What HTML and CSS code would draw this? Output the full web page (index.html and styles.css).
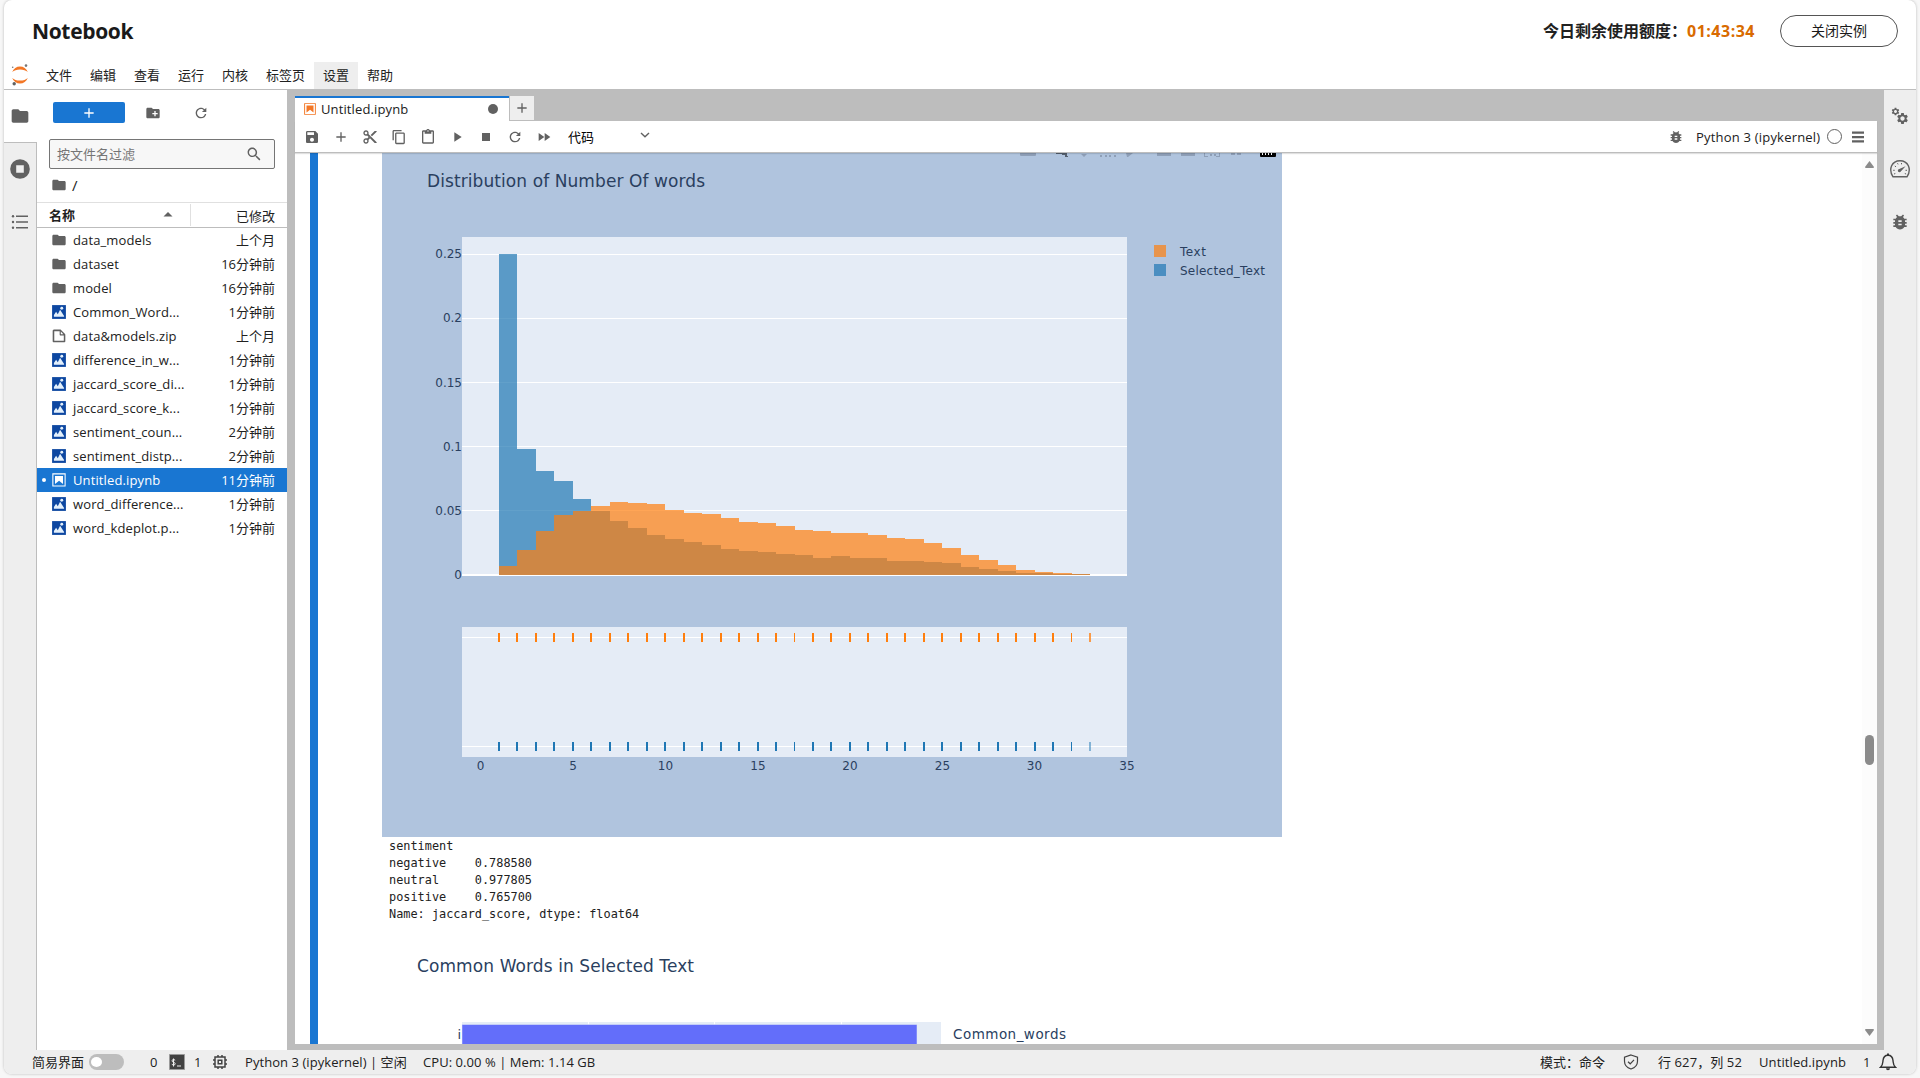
FILE: index.html
```html
<!DOCTYPE html>
<html lang="zh-CN">
<head>
<meta charset="utf-8">
<title>Notebook</title>
<link rel="stylesheet" href="styles.css">
</head>
<body>
<svg class="defs" width="0" height="0">
  <symbol id="folder" viewBox="0 0 24 24"><path d="M10 4H4c-1.1 0-1.99.9-1.99 2L2 18c0 1.1.9 2 2 2h16c1.1 0 2-.9 2-2V8c0-1.1-.9-2-2-2h-8l-2-2z"/></symbol>
  <symbol id="image" viewBox="0 0 22 22"><path fill="#0d47a1" d="M1.5 1.5h19v19h-19z"/><path fill="#e3f0fb" d="M4 17.5V15l3-4.5 2.300 3.500L12.500 8l5.500 8.500v1z"/><circle cx="14.800" cy="5.800" r="2" fill="#e3f0fb"/></symbol>
  <symbol id="file" viewBox="0 0 22 22"><path d="M19.300 8.200l-5.500-5.500c-.3-.3-.7-.5-1.200-.5H3.900c-.8.1-1.600.9-1.600 1.800v14.100c0 .9.7 1.600 1.600 1.600h14.200c.9 0 1.600-.7 1.600-1.600V9.400c.1-.5-.1-.9-.4-1.200zm-5.800-3.300l3.400 3.600h-3.400V4.900zm3.900 12.700H4.700c-.1 0-.2 0-.2-.2V4.700c0-.2.1-.3.2-.3h7.200v4.400s0 .8.300 1.100c.3.3 1.100.3 1.100.3h4.300v7.200s-.1.200-.2.200z"/></symbol>
  <symbol id="book" viewBox="0 0 22 22"><path d="M18.700 3.300v15.400H3.300V3.300h15.400m1.500-1.500H1.800v18.300h18.300l.1-18.300z"/><path d="M16.500 16.500l-5.400-4.300-5.600 4.300v-11h11z"/></symbol>
  <symbol id="plus" viewBox="0 0 24 24"><path d="M19 13h-6v6h-2v-6H5v-2h6V5h2v6h6v2z"/></symbol>
  <symbol id="refresh" viewBox="0 0 18 18"><path d="M9 13.500c-2.490 0-4.500-2.010-4.500-4.500S6.510 4.500 9 4.500c1.240 0 2.360.52 3.170 1.330L10 8h5V3l-1.760 1.760C12.150 3.680 10.660 3 9 3 5.690 3 3.010 5.690 3.010 9S5.690 15 9 15c2.970 0 5.430-2.160 5.900-5h-1.520c-.46 2-2.240 3.500-4.380 3.500z"/></symbol>
  <symbol id="bug" viewBox="0 0 24 24"><path d="M20 8h-2.810c-.45-.78-1.070-1.450-1.820-1.960L17 4.410 15.590 3l-2.170 2.170C12.960 5.060 12.490 5 12 5s-.96.06-1.410.17L8.410 3 7 4.410l1.620 1.630C7.880 6.550 7.260 7.220 6.810 8H4v2h2.090c-.05.33-.09.66-.09 1v1H4v2h2v1c0 .34.04.67.09 1H4v2h2.810c1.040 1.790 2.970 3 5.190 3s4.150-1.210 5.190-3H20v-2h-2.090c.05-.33.09-.66.09-1v-1h2v-2h-2v-1c0-.34-.04-.67-.09-1H20V8zm-6 8h-4v-2h4v2zm0-4h-4v-2h4v2z"/></symbol>
  <symbol id="gear" viewBox="0 0 24 24"><path d="M19.430 12.980c.04-.32.070-.64.070-.98s-.03-.66-.07-.98l2.110-1.650c.19-.15.240-.42.120-.64l-2-3.460c-.12-.22-.39-.3-.61-.22l-2.490 1c-.52-.4-1.080-.73-1.690-.98l-.38-2.650C14.460 2.180 14.250 2 14 2h-4c-.25 0-.46.18-.49.420l-.38 2.650c-.61.250-1.170.590-1.690.980l-2.490-1c-.23-.09-.49 0-.61.220l-2 3.460c-.13.220-.07.490.12.640l2.110 1.650c-.04.320-.07.650-.07.980s.03.660.070.980l-2.110 1.650c-.19.150-.24.420-.12.640l2 3.460c.12.220.39.300.61.220l2.490-1c.52.400 1.080.730 1.690.980l.38 2.650c.03.240.24.420.49.420h4c.25 0 .46-.18.490-.42l.38-2.650c.61-.25 1.170-.59 1.690-.98l2.490 1c.23.090.49 0 .61-.22l2-3.460c.12-.22.070-.49-.12-.64l-2.110-1.650zM12 16c-2.200 0-4-1.800-4-4s1.800-4 4-4 4 1.800 4 4-1.800 4-4 4z"/></symbol>
</svg>

<div class="card">
  <header class="top">
    <h1>Notebook</h1>
    <div class="quota">今日剩余使用额度：<span class="timer">01:43:34</span></div>
    <button class="close">关闭实例</button>
  </header>

  <nav class="menu">
    <svg class="logo" width="18" height="22" viewBox="0 0 18 22"><path fill="#f37726" d="M1.200 8C2.500 4.500 5.500 2.500 9 2.500S15.500 4.500 16.800 8C15 6.300 12.300 5.400 9 5.400S3 6.300 1.200 8zM1.200 14c1.300 3.500 4.300 5.500 7.800 5.500s6.500-2 7.800-5.500c-1.800 1.700-4.500 2.600-7.800 2.600S3 15.700 1.200 14z"/><circle cx="15" cy="1.600" r="1.300" fill="#767677"/><circle cx="1.700" cy="3.200" r=".8" fill="#767677"/><circle cx="3.200" cy="19.800" r="1.700" fill="#616262"/></svg>
    <span>文件</span><span>编辑</span><span>查看</span><span>运行</span><span>内核</span><span>标签页</span><span class="on">设置</span><span>帮助</span>
  </nav>

  <div class="work">
    <aside class="rail left">
      <div class="railtab on"><svg width="20" height="20"><use href="#folder"/></svg></div>
      <div class="railtab"><svg width="20" height="20" viewBox="0 0 20 20"><circle cx="10" cy="10" r="9.800"/><path fill="#eee" d="M6.200 6.200h7.600v7.600H6.200z"/></svg></div>
      <div class="railtab"><svg width="20" height="20" viewBox="0 0 20 20"><path d="M6 3.500h12v1.600H6zM6 9.200h12v1.600H6zM6 14.900h12v1.600H6z"/><circle cx="3" cy="4.300" r="1.200"/><circle cx="3" cy="10" r="1.200"/><circle cx="3" cy="15.700" r="1.200"/></svg></div>
    </aside>

    <section class="files">
      <div class="actions">
        <button class="new"><svg width="16" height="16"><use href="#plus"/></svg></button>
        <svg class="newdir" width="16" height="16" viewBox="0 0 24 24"><path d="M20 6h-8l-2-2H4c-1.110 0-1.990.89-1.990 2L2 18c0 1.110.89 2 2 2h16c1.110 0 2-.89 2-2V8c0-1.110-.89-2-2-2zm-1 8h-3v3h-2v-3h-3v-2h3V9h2v3h3v2z"/></svg>
        <svg class="reload" width="16" height="16"><use href="#refresh"/></svg>
      </div>
      <div class="filter"><span>按文件名过滤</span><svg width="16" height="16" viewBox="0 0 18 18"><path d="M12.100 10.900h-.7l-.2-.2c.8-.9 1.300-2.200 1.300-3.500 0-3-2.400-5.400-5.400-5.400S1.800 4.200 1.800 7.100s2.400 5.400 5.400 5.400c1.300 0 2.500-.5 3.500-1.300l.2.200v.7l4.100 4.100 1.200-1.200-4.100-4.100zm-5 0c-2.100 0-3.700-1.700-3.700-3.700s1.700-3.700 3.700-3.700 3.700 1.700 3.700 3.700-1.600 3.700-3.700 3.700z"/></svg></div>
      <div class="crumb"><svg width="16" height="16"><use href="#folder"/></svg><span>/</span></div>
      <div class="thead"><b>名称</b><svg width="10" height="5" viewBox="0 0 10 5"><path d="M5 0l4.500 4.500H.5z"/></svg><span class="mod">已修改</span></div>
      <ul class="list">
        <li><svg class="ic"><use href="#folder"/></svg><span class="nm">data_models</span><span class="tm">上个月</span></li>
        <li><svg class="ic"><use href="#folder"/></svg><span class="nm">dataset</span><span class="tm">16分钟前</span></li>
        <li><svg class="ic"><use href="#folder"/></svg><span class="nm">model</span><span class="tm">16分钟前</span></li>
        <li><svg class="ic"><use href="#image"/></svg><span class="nm">Common_Word...</span><span class="tm">1分钟前</span></li>
        <li><svg class="ic"><use href="#file"/></svg><span class="nm">data&amp;models.zip</span><span class="tm">上个月</span></li>
        <li><svg class="ic"><use href="#image"/></svg><span class="nm">difference_in_w...</span><span class="tm">1分钟前</span></li>
        <li><svg class="ic"><use href="#image"/></svg><span class="nm">jaccard_score_di...</span><span class="tm">1分钟前</span></li>
        <li><svg class="ic"><use href="#image"/></svg><span class="nm">jaccard_score_k...</span><span class="tm">1分钟前</span></li>
        <li><svg class="ic"><use href="#image"/></svg><span class="nm">sentiment_coun...</span><span class="tm">2分钟前</span></li>
        <li><svg class="ic"><use href="#image"/></svg><span class="nm">sentiment_distp...</span><span class="tm">2分钟前</span></li>
        <li class="sel"><svg class="ic"><use href="#book"/></svg><span class="nm">Untitled.ipynb</span><span class="tm">11分钟前</span></li>
        <li><svg class="ic"><use href="#image"/></svg><span class="nm">word_difference...</span><span class="tm">1分钟前</span></li>
        <li><svg class="ic"><use href="#image"/></svg><span class="nm">word_kdeplot.p...</span><span class="tm">1分钟前</span></li>
      </ul>
    </section>

    <main class="dock">
      <div class="tabs">
        <div class="tab"><svg width="14" height="14"><use href="#book"/></svg><span>Untitled.ipynb</span><i></i></div>
        <div class="addtab"><svg width="16" height="16"><use href="#plus"/></svg></div>
      </div>
      <div class="toolbar">
        <svg viewBox="0 0 24 24"><path d="M17 3H5c-1.110 0-2 .9-2 2v14c0 1.100.89 2 2 2h14c1.100 0 2-.9 2-2V7l-4-4zm-5 16c-1.660 0-3-1.340-3-3s1.340-3 3-3 3 1.340 3 3-1.340 3-3 3zm3-10H5V5h10v4z"/></svg>
        <svg viewBox="0 0 24 24"><use href="#plus"/></svg>
        <svg viewBox="0 0 24 24"><path d="M9.640 7.640c.23-.5.360-1.050.360-1.640 0-2.210-1.790-4-4-4S2 3.790 2 6s1.790 4 4 4c.59 0 1.140-.13 1.640-.36L10 12l-2.360 2.360C7.140 14.130 6.590 14 6 14c-2.210 0-4 1.790-4 4s1.790 4 4 4 4-1.790 4-4c0-.59-.13-1.140-.36-1.640L12 14l7 7h3v-1L9.640 7.640zM6 8c-1.100 0-2-.89-2-2s.9-2 2-2 2 .89 2 2-.9 2-2 2zm0 12c-1.100 0-2-.89-2-2s.9-2 2-2 2 .89 2 2-.9 2-2 2zm6-7.500c-.28 0-.5-.22-.5-.5s.22-.5.5-.5.5.22.5.5-.22.5-.5.5zM19 3l-6 6 2 2 7-7V3z"/></svg>
        <svg viewBox="0 0 18 18"><path d="M11.900 1H3.200c-.8 0-1.500.7-1.500 1.500v10.200h1.500V2.500h8.700V1zm2.200 2.900h-8c-.8 0-1.500.7-1.500 1.500v10.200c0 .8.700 1.500 1.500 1.500h8c.8 0 1.500-.7 1.500-1.500V5.400c-.1-.8-.7-1.500-1.500-1.500zm0 11.700h-8V5.400h8v10.200z"/></svg>
        <svg viewBox="0 0 24 24"><path d="M19 2h-4.180C14.400.84 13.300 0 12 0c-1.300 0-2.400.84-2.820 2H5c-1.100 0-2 .9-2 2v16c0 1.100.9 2 2 2h14c1.100 0 2-.9 2-2V4c0-1.100-.9-2-2-2zm-7 0c.55 0 1 .45 1 1s-.45 1-1 1-1-.45-1-1 .45-1 1-1zm7 18H5V4h2v3h10V4h2v16z"/></svg>
        <svg viewBox="0 0 24 24"><path d="M8 5v14l11-7z"/></svg>
        <svg viewBox="0 0 24 24"><path d="M6 6h12v12H6z"/></svg>
        <svg viewBox="0 0 18 18"><use href="#refresh"/></svg>
        <svg viewBox="0 0 24 24"><path d="M4 18l8.500-6L4 6v12zm9-12v12l8.500-6L13 6z"/></svg>
        <span class="kind">代码</span>
        <svg class="caret" viewBox="0 0 10 6"><path d="M1 1l4 3.800L9 1" fill="none" stroke="#616161" stroke-width="1.400"/></svg>
        <span class="grow"></span>
        <svg class="dbg" viewBox="0 0 24 24"><use href="#bug"/></svg>
        <span class="kernel">Python 3 (ipykernel)</span>
        <i class="idle"></i>
        <svg class="burger" viewBox="0 0 12 12"><path d="M0 .5h12v2.300H0zM0 4.900h12v2.300H0zM0 9.300h12v2.300H0z"/></svg>
      </div>

      <div class="content">
        <div class="collapser"></div>
        <div class="output">
          <svg class="plot" width="900" height="684" viewBox="382 153 900 684">
            <path fill="#b0c4de" d="M382 153h900v684H382z"/>
            <path fill="#8e9fb7" d="M1020 153h16v2q0 1-1 1h-14q-1 0-1-1zM1081 154h6l-3 3zM1100 155h2v2h-2zM1105 155h2v2h-2zM1109 155h2v2h-2zM1114 155h2v2h-2zM1126 153h7l-5 4h-1zM1157 153h14v3h-14zM1181 153h14v3h-14zM1204 153h1v3h3v1h-4zM1210 154h2v2h-2zM1214 154h2v2h-2zM1220 153h-1v3h-3v1h4zM1231 153h4v2h-4zM1237 153h4v2h-4z"/>
            <path fill="#55606f" d="M1056 153h11v3l1 0v1h-3v-2h-3v-1h-6z"/>
            <path fill="#000" d="M1260 153h16v3q0 1-1 1h-14q-1 0-1-1z"/><path stroke="#fff" d="M1262.500 153v2M1265.500 153v2M1268.500 153v2M1271.500 153v2"/>
            <text x="427" y="187" font-size="17" textLength="278">Distribution of Number Of words</text>
            <path fill="#e5ecf6" d="M462 237h665v339H462zM462 627h665v130H462z"/>
            <path fill="#fff" d="M462 254h665v1H462zM462 318h665v1H462zM462 382h665v1H462zM462 446h665v1H462zM462 510h665v1H462zM462 574h665v2H462zM462 637h665v1H462zM462 746h665v1H462z"/>
            <path fill="#1f77b4" fill-opacity=".7" d="M499 575V254H517V449H536V471H554V481H573V499H591V511H610V521H628V528H647V535H665V539H684V542H702V545H721V549H739V551H758V552H776V554H795V555H813V558H831V556H850V558H887V561H924V562H942V563H961V567H979V569H998V571H1016V573H1053V574H1090V575z"/>
            <path fill="#ff7f0e" fill-opacity=".7" d="M499 575V566H517V550H536V531H554V515H573V511H591V506H610V502H628V503H647V504H665V510H684V513H702V514H721V518H739V522H758V523H776V526H795V530H813V531H831V533H868V535H887V538H905V539H924V543H942V548H961V555H979V560H998V565H1016V570H1035V572H1053V573H1072V574H1090V575z"/>
            <path stroke="#ff7f0e" stroke-width="2" d="M499 633v9M517 633v9M536 633v9M554 633v9M573 633v9M591 633v9M610 633v9M628 633v9M647 633v9M665 633v9M684 633v9M702 633v9M721 633v9M739 633v9M758 633v9M776 633v9M813 633v9M831 633v9M850 633v9M868 633v9M887 633v9M905 633v9M924 633v9M942 633v9M961 633v9M979 633v9M998 633v9M1016 633v9M1035 633v9M1053 633v9"/>
            <path stroke="#ff7f0e" d="M794.500 633v9M1071.500 633v9"/><path stroke="#ff7f0e" stroke-width="2" stroke-opacity=".75" d="M1090 633v9"/>
            <path stroke="#1f77b4" stroke-width="2" d="M499 742v9M517 742v9M536 742v9M554 742v9M573 742v9M591 742v9M610 742v9M628 742v9M647 742v9M665 742v9M684 742v9M702 742v9M721 742v9M739 742v9M758 742v9M776 742v9M813 742v9M831 742v9M850 742v9M868 742v9M887 742v9M905 742v9M924 742v9M942 742v9M961 742v9M979 742v9M998 742v9M1016 742v9M1035 742v9M1053 742v9"/>
            <path stroke="#1f77b4" d="M794.500 742v9M1071.500 742v9"/><path stroke="#1f77b4" stroke-width="2" stroke-opacity=".5" d="M1090 742v9"/>
            <g font-size="12" text-anchor="end"><text x="462" y="258">0.25</text><text x="462" y="322">0.2</text><text x="462" y="387">0.15</text><text x="462" y="451">0.1</text><text x="462" y="515">0.05</text><text x="462" y="579">0</text></g>
            <g font-size="12" text-anchor="middle"><text x="480.500" y="770">0</text><text x="573" y="770">5</text><text x="665.500" y="770">10</text><text x="758" y="770">15</text><text x="850" y="770">20</text><text x="942.500" y="770">25</text><text x="1034.500" y="770">30</text><text x="1127" y="770">35</text></g>
            <path fill="#e7944c" d="M1154 245h12v12h-12z"/><path fill="#4a8ec1" d="M1154 264h12v12h-12z"/>
            <text x="1180" y="256" font-size="12" textLength="26">Text</text><text x="1180" y="275" font-size="12" textLength="85">Selected_Text</text>
          </svg>
<pre>sentiment
negative    0.788580
neutral     0.977805
positive    0.765700
Name: jaccard_score, dtype: float64</pre>
          <svg class="plot" width="900" height="118" viewBox="382 926 900 118">
            <text x="417" y="972" font-size="17" textLength="277">Common Words in Selected Text</text>
            <path fill="#e5ecf6" d="M462 1022h479v22H462z"/>
            <path fill="#fff" d="M588 1022h1v22h-1zM714 1022h1v22h-1zM841 1022h1v22h-1z"/>
            <path fill="#636efa" stroke="#e5ecf6" stroke-width=".5" d="M462 1024.500h455v25H462z"/>
            <text x="461" y="1039" font-size="13" text-anchor="end">i</text>
            <text x="953" y="1039" font-size="13.500" textLength="113">Common_words</text>
          </svg>
        </div>
        <div class="scroll"><svg width="9" height="7" viewBox="0 0 9 7"><path d="M4.500 0L9 6q0 1-1 1H1q-1 0-1-1z"/></svg><i class="thumb"></i><svg width="9" height="7" viewBox="0 0 9 7"><path d="M4.500 7L9 1q0-1-1-1H1q-1 0-1 1z"/></svg></div>
      </div>
    </main>

    <aside class="rail right">
      <div class="railtab"><svg width="18" height="18" viewBox="0 0 18 18"><use href="#gear" x="0" y="0" width="9" height="9"/><use href="#gear" x="5" y="5" width="13" height="13"/></svg></div>
      <div class="railtab"><svg width="20" height="20" viewBox="0 0 20 20"><path d="M3 17.800C-2 10 2 1.700 10 1.700S22 10 17 17.800z" fill="none" stroke="#616161" stroke-width="1.400"/><path d="M15.600 7.200L10.800 12.500a1.600 1.600 0 1 1-1.500-2.400z"/><path d="M3.200 11.300h1.500M4.800 7l1.200.8M7.500 4.200l.6 1.200M11.500 4v1.300M15.500 11.300H17M4 15l1.300-.5M14.800 14.500l1.300.5" stroke="#616161"/></svg></div>
      <div class="railtab"><svg width="20" height="20"><use href="#bug"/></svg></div>
    </aside>
  </div>

  <footer class="status">
    <span class="simple">简易界面</span><i class="switch"></i>
    <span class="n0">0</span>
    <svg class="term" width="16" height="16" viewBox="0 0 16 16"><path fill="#424242" stroke="#9a9a9a" d="M.5.5h15v15H.5z"/><path fill="none" stroke="#eee" d="M6.200 6.200C4.500 5 2.800 5.700 3 7c.2 1.500 3.200 1 3.200 2.700 0 1.500-2 1.700-3.400.6M4.500 4.500v8M8 12h4"/></svg>
    <span class="n1">1</span>
    <svg class="chip" width="16" height="16" viewBox="0 0 16 16"><path fill="none" stroke="#424242" stroke-width="1.500" d="M3 3h10v10H3zM6.200 6.200h3.600v3.600H6.200zM6 1v2M10 1v2M6 13v2M10 13v2M1 6h2M1 10h2M13 6h2M13 10h2"/></svg>
    <span class="kern">Python 3 (ipykernel) | 空闲</span>
    <span class="cpu">CPU: 0.00 % | Mem: 1.14 GB</span>
    <span class="grow"></span>
    <span class="mode">模式：命令</span>
    <svg class="shield" width="16" height="16" viewBox="0 0 16 16"><path fill="none" stroke="#424242" stroke-width="1.200" d="M8 1l6.500 2.200v4C14.500 11 12 13.700 8 15c-4-1.300-6.500-4-6.500-7.800v-4zM5 7.800l2.200 2L11 5.800"/></svg>
    <span class="pos">行 627，列 52</span>
    <span class="fname">Untitled.ipynb</span>
    <span class="cnt">1</span>
    <svg class="bell" width="18" height="18" viewBox="0 0 18 18"><path fill="none" stroke="#333" stroke-width="1.400" d="M1.500 14.300h15C14 12 14.300 10 14 7.500 13.700 4.500 12 2.200 9 2.200S4.300 4.500 4 7.500C3.700 10 4 12 1.500 14.300z"/><path fill="#333" d="M7 15.300h4a2 2 0 0 1-4 0zM8 .5h2v2H8z"/></svg>
  </footer>
</div>
</body>
</html>
```

FILE: styles.css
```css
* { box-sizing: border-box; }
body { margin: 0; height: 1078px; overflow: hidden; background: #f7f7f7; padding: 0 4px; color: #212121; font: 13px/24px "Open Sans", "Noto Sans CJK SC", sans-serif; }
svg { fill: #616161; flex: none; display: block; }
.defs { position: absolute; }
.card { width: 1912px; height: 1074px; display: flex; flex-direction: column; background: #fff; border-radius: 8px; overflow: hidden; box-shadow: 0 0 3px rgba(0,0,0,.25); }
.grow { flex: 1; }

.top { height: 62px; display: flex; align-items: center; padding: 0 18px 0 28px; flex: none; }
.top h1 { margin: 0; font-size: 21px; line-height: 30px; font-weight: 700; flex: 1; letter-spacing: -.35px; color: #1a1a1a; }
.quota { font-size: 16px; font-weight: 700; display: flex; }
.timer { color: #d96b00; width: 93px; letter-spacing: .5px; }
.close { width: 118px; height: 32px; border: 1px solid #555; border-radius: 16px; background: #fff; font: inherit; font-size: 14px; padding: 0; color: #1a1a1a; }

.menu { height: 28px; display: flex; border-bottom: 1px solid #bdbdbd; flex: none; }
.menu .logo { margin: 2px 8px 0 7px; }
.menu span { padding: 0 9px; line-height: 27px; }
.menu .on { background: #eee; }

.work { height: 960px; display: flex; flex: none; background: #bdbdbd; }
.rail { background: #eee; flex: none; }
.rail.left { width: 33px; border-right: 1px solid #bdbdbd; }
.rail.right { width: 32px; margin-left: 7px; }
.railtab { height: 53px; display: flex; align-items: center; justify-content: center; padding-bottom: 2px; }
.rail.left .on { width: 33px; background: #fff; border-bottom: 1px solid #bdbdbd; padding: 0 1px 0 0; }

.files { width: 250px; margin-right: 8px; background: #fff; display: flex; flex-direction: column; flex: none; }
.actions { display: flex; align-items: center; height: 21px; margin: 12px 0 0 16px; }
.new { width: 72px; height: 21px; border: 0; border-radius: 2px; background: #1976d2; padding: 0; display: grid; place-items: center; }
.new svg { fill: #fff; }
.newdir { margin-left: 20px; }
.reload { margin-left: 32px; }
.filter { width: 226px; height: 30px; margin: 16px 12px 0; border: 1px solid #757575; border-radius: 2px; background: #f7f7f7; display: flex; align-items: center; justify-content: space-between; padding: 0 12px 0 7px; color: #757575; }
.crumb { display: flex; align-items: center; height: 33px; padding: 0 0 1px 14px; gap: 5px; }
.crumb span { font-size: 15px; }
.thead { height: 26px; border-top: 1px solid #e0e0e0; border-bottom: 1px solid #bdbdbd; display: flex; align-items: center; padding: 0 12px 1px; }
.thead svg { margin-left: 88px; }
.mod { margin-left: 17px; border-left: 1px solid #e0e0e0; flex: 1; text-align: right; height: 22px; }
.list { list-style: none; margin: 0; padding: 0; }
.list li { height: 24px; display: flex; align-items: center; padding: 0 12px 0 14px; }
.ic { width: 16px; height: 16px; }
.nm { margin-left: 6px; flex: 1; white-space: nowrap; letter-spacing: .12px; }
.tm { white-space: nowrap; }
.list .sel { background: #1976d2; color: #fff; }
.sel .ic { fill: #fff; }
.sel::before { content: ""; width: 4px; height: 4px; border-radius: 50%; background: #fff; margin: 0 5px 0 -9px; }

.dock { width: 1582px; display: flex; flex-direction: column; height: 954px; }
.tabs { height: 31px; padding-top: 6px; display: flex; }
.tab { width: 214px; height: 25px; background: #fff; border-top: 2px solid #1976d2; display: flex; align-items: center; padding: 0 11px 2px 8px; letter-spacing: .12px; }
.tab svg { fill: #f37726; }
.tab span { margin-left: 4px; flex: 1; }
.tab i { width: 10px; height: 10px; border-radius: 50%; background: #616161; }
.addtab { width: 24px; height: 24px; margin-left: 1px; background: #eee; display: grid; place-items: center; }
.toolbar { height: 32px; background: #fff; border-bottom: 1px solid #bdbdbd; box-shadow: 0 1px 1px rgba(0,0,0,.12); display: flex; align-items: center; padding: 0 12px 0 9px; position: relative; }
.toolbar svg { width: 16px; height: 16px; margin-right: 13px; }
.kind { margin-left: 3px; color: #000; width: 72px; }
.toolbar .caret { width: 10px; height: 6px; margin: 0 0 3px; }
.toolbar .dbg { width: 16px; height: 16px; margin-right: 12px; }
.kernel { white-space: nowrap; width: 131px; letter-spacing: .2px; }
.idle { width: 15px; height: 15px; border: 1px solid #616161; border-radius: 50%; }
.toolbar .burger { width: 12px; height: 12px; margin: 0 1px 0 10px; }

.content { height: 891px; background: #fff; display: flex; overflow: hidden; padding-left: 15px; }
.collapser { width: 8px; background: #1976d2; margin-right: 64px; }
.output { flex: 1; }
.plot { font-family: "DejaVu Sans", sans-serif; }
.plot text { fill: #2a3f5f; }
pre { margin: 0; height: 89px; padding: 1px 0 0 7px; font: 11.89px/17px "DejaVu Sans Mono", monospace; }
.scroll { width: 15px; background: #fcfcfc; display: flex; flex-direction: column; align-items: center; padding: 8px 0; }
.scroll svg { fill: #8b8b8b; }
.thumb { width: 9px; height: 30px; border-radius: 5px; background: #8b8b8b; margin: 567px 0 auto; }

.status { height: 24px; background: #eee; display: flex; align-items: center; padding: 0 19px 0 28px; white-space: nowrap; flex: none; }
.simple { width: 57px; }
.switch { width: 35px; height: 16px; border-radius: 8px; background: #bdbdbd; padding: 3px 2px; }
.switch::before { content: ""; display: block; width: 11px; height: 10px; border-radius: 50%; background: #fff; }
.n0 { margin-left: 26px; width: 19px; }
.n1 { margin-left: 9px; width: 18px; }
.chip { margin-right: 17px; }
.kern { width: 178px; letter-spacing: .06px; }
.cpu { letter-spacing: .06px; }
.mode { width: 83px; }
.shield { margin-right: 19px; }
.pos { width: 101px; letter-spacing: .1px; }
.fname { width: 104px; letter-spacing: .1px; }
.cnt { width: 16px; }
```
